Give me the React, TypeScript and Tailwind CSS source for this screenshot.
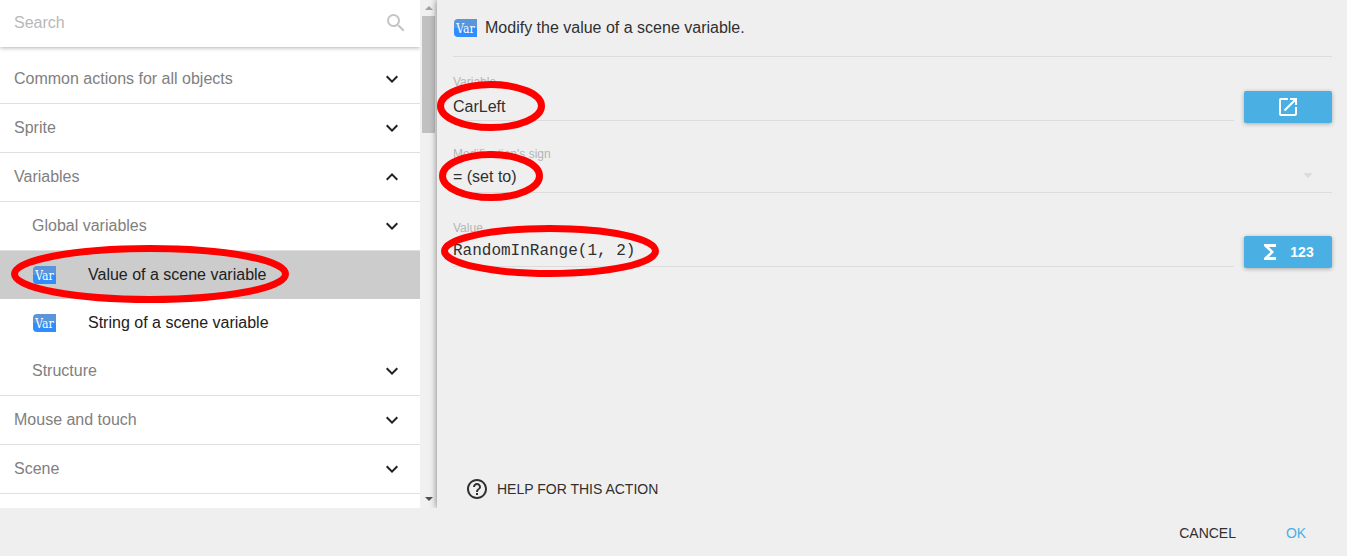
import React, { useState } from "react";
import {
  MdSearch,
  MdOpenInNew,
  MdFunctions,
  MdHelpOutline,
  MdKeyboardArrowDown,
  MdKeyboardArrowUp,
  MdArrowDropDown,
} from "react-icons/md";

function VarIcon() {
  return (
    <span
      aria-hidden="true"
      className="flex h-[18px] w-[23px] shrink-0 items-center justify-center rounded-l bg-linear-to-b from-[#5b96da] from-50% to-[#2f8dff] to-50% pt-px font-['DejaVu_Serif_Condensed','DejaVu_Serif',serif] text-xs leading-none text-white"
    >
      Var
    </span>
  );
}

function GroupRow({
  label,
  nested = false,
  open = false,
}: {
  label: string;
  nested?: boolean;
  open?: boolean;
}) {
  return (
    <button
      type="button"
      aria-expanded={open}
      className={`flex w-full items-center justify-between border-b border-[#e0e0e0] pr-4 text-left text-[#808080] ${
        nested ? "pl-8" : "pl-3.5"
      }`}
    >
      <span className="py-3 leading-6">{label}</span>
      {open ? (
        <MdKeyboardArrowUp className="size-6 text-[#212121]" />
      ) : (
        <MdKeyboardArrowDown className="size-6 text-[#212121]" />
      )}
    </button>
  );
}

function ActionRow({ label, selected = false }: { label: string; selected?: boolean }) {
  return (
    <button
      type="button"
      aria-pressed={selected}
      className={`flex w-full items-center gap-8 pl-[33px] text-left text-[#212121] ${
        selected ? "bg-[#cccccc]" : "bg-white"
      }`}
    >
      <VarIcon />
      <span className="py-3 leading-6">{label}</span>
    </button>
  );
}

function Scrollbar() {
  return (
    <div aria-hidden="true" className="flex w-[17px] shrink-0 flex-col items-center bg-[#f1f1f1]">
      <svg className="h-4 w-4" viewBox="0 0 16 16">
        <path d="M4 10h8l-4-4z" fill="#a3a3a3" />
      </svg>
      <div className="h-[117px] w-[13px] bg-[#c1c1c1]" />
      <svg className="mt-auto h-4 w-4" viewBox="0 0 16 16">
        <path d="M4 5h8l-4 4z" fill="#505050" />
      </svg>
    </div>
  );
}

const labelStyle = "block text-xs leading-4 text-[#b5b5b5]";
const fieldStyle =
  "block h-[31px] w-full appearance-none border-b border-[#dcdcdc] bg-transparent text-[#303030] outline-none";
const blueButton =
  "flex h-8 w-[88px] shrink-0 items-center justify-center gap-2 rounded-xs bg-[#4ab0e4] text-white shadow-[0_1px_4px_rgba(0,0,0,0.3)]";

export default function App() {
  const [variable, setVariable] = useState("CarLeft");
  const [value, setValue] = useState("RandomInRange(1, 2)");

  return (
    <div className="relative flex min-h-screen flex-col overflow-hidden bg-[#efefef] font-['Liberation_Sans',Arial,sans-serif] text-base">
      <div className="flex grow">
        <aside className="flex w-[437px] shrink-0">
          <div className="min-w-0 grow bg-white">
            <div className="flex h-[47px] items-center pr-3 pb-0.5 pl-3.5 shadow-[0_1px_4px_rgba(0,0,0,0.3)]">
              <input
                type="search"
                aria-label="Search"
                placeholder="Search"
                className="h-8 min-w-0 grow bg-transparent outline-none placeholder:text-[#b8b8b8]"
              />
              <MdSearch className="size-6 text-[#c4c4c4]" />
            </div>
            <nav className="pt-2">
              <GroupRow label="Common actions for all objects" />
              <GroupRow label="Sprite" />
              <GroupRow label="Variables" open />
              <GroupRow label="Global variables" nested />
              <ActionRow label="Value of a scene variable" selected />
              <ActionRow label="String of a scene variable" />
              <GroupRow label="Structure" nested />
              <GroupRow label="Mouse and touch" />
              <GroupRow label="Scene" />
            </nav>
          </div>
          <Scrollbar />
        </aside>

        <main className="flex min-w-0 grow flex-col bg-[#efefef] pr-[15px] pl-4 shadow-[0_0_7px_rgba(0,0,0,0.5)]">
          <header className="flex h-[57px] items-center gap-2 border-b border-[#dcdcdc] pl-px text-[#303030]">
            <VarIcon />
            <h1>Modify the value of a scene variable.</h1>
          </header>

          <div className="flex items-end gap-2.5 pt-[17px]">
            <div className="mb-0.5 min-w-0 grow">
              <label htmlFor="variable" className={labelStyle}>
                Variable
              </label>
              <input
                id="variable"
                className={`${fieldStyle} pt-1`}
                value={variable}
                onChange={(e) => setVariable(e.target.value)}
              />
            </div>
            <button type="button" aria-label="Edit variables" className={blueButton}>
              <MdOpenInNew className="size-6" />
            </button>
          </div>

          <div className="pt-[23px]">
            <label htmlFor="sign" className={labelStyle}>
              Modification's sign
            </label>
            <div className="relative">
              <select id="sign" className={fieldStyle} defaultValue="set">
                <option value="set">= (set to)</option>
                <option value="add">+ (add)</option>
                <option value="subtract">- (subtract)</option>
              </select>
              <MdArrowDropDown className="pointer-events-none absolute top-px right-3 size-6 text-[#dcdcdc]" />
            </div>
          </div>

          <div className="flex items-end gap-2.5 pt-[27px]">
            <div className="mb-px min-w-0 grow">
              <label htmlFor="value" className={labelStyle}>
                Value
              </label>
              <input
                id="value"
                className={`${fieldStyle} font-['Liberation_Mono',monospace]`}
                value={value}
                onChange={(e) => setValue(e.target.value)}
              />
            </div>
            <button type="button" className={`${blueButton} pr-1`}>
              <MdFunctions className="size-6" />
              <span className="text-sm font-bold">123</span>
            </button>
          </div>

          <div className="mt-auto pl-3">
            <button type="button" className="flex h-[31px] items-start gap-2 text-sm text-[#303030]">
              <MdHelpOutline className="size-6" />
              <span className="leading-6">HELP FOR THIS ACTION</span>
            </button>
          </div>
        </main>
      </div>

      <footer className="relative flex h-12 shrink-0 items-center justify-end bg-[#efefef] pt-px pr-[7px] text-sm">
        <button type="button" className="h-9 px-4 text-[#303030]">
          CANCEL
        </button>
        <button type="button" className="h-9 w-[88px] text-[#4ab0e4]">
          OK
        </button>
      </footer>

      <svg
        aria-hidden="true"
        className="pointer-events-none absolute top-0 left-0 h-[320px] w-[680px]"
        viewBox="0 0 680 320"
        fill="none"
        stroke="#ff0000"
        strokeWidth="7"
      >
        <ellipse cx="491" cy="106" rx="50.5" ry="21.5" />
        <ellipse cx="491" cy="176" rx="48.5" ry="21.5" />
        <ellipse cx="550" cy="251" rx="105.5" ry="22.5" />
        <ellipse cx="150" cy="274" rx="135.5" ry="25.5" />
      </svg>
    </div>
  );
}
